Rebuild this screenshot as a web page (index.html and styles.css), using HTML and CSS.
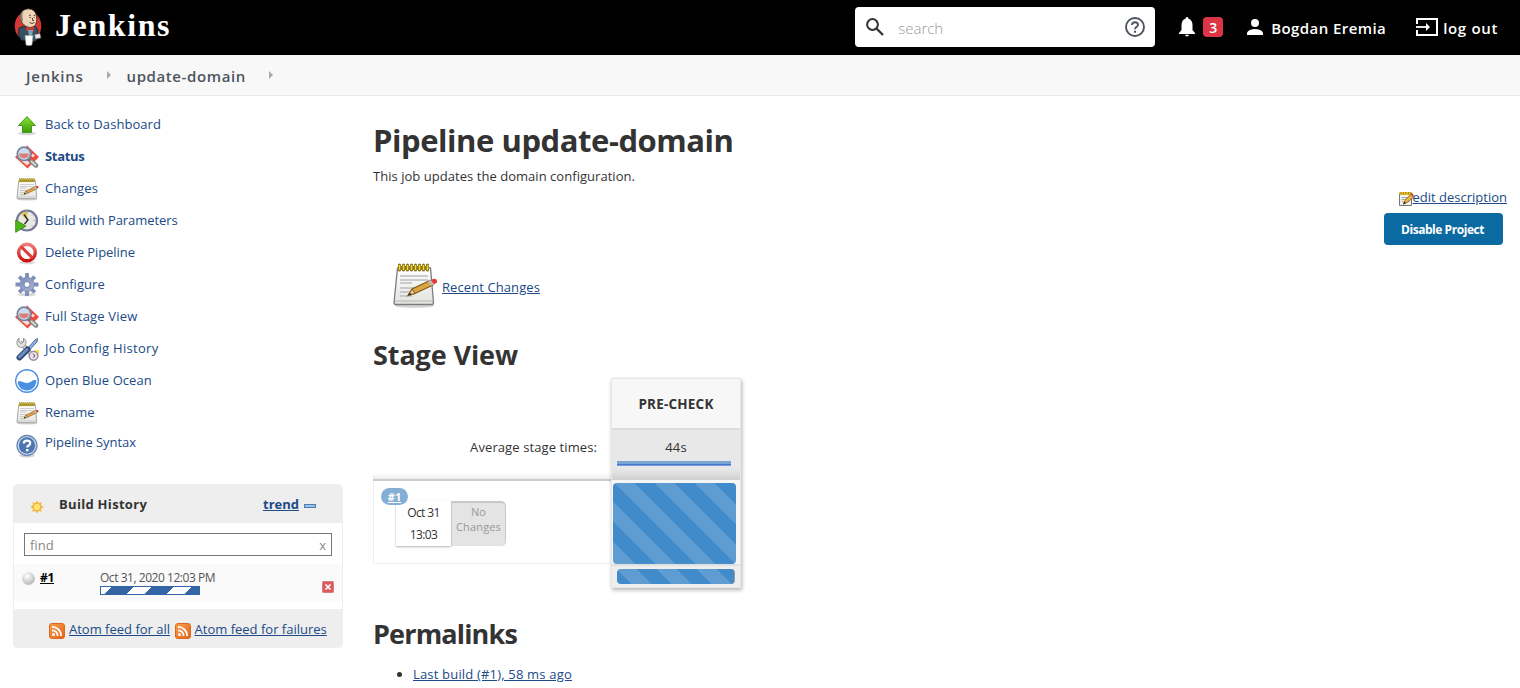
FILE: index.html
```html
<!DOCTYPE html>
<html lang="en">
<head>
<meta charset="utf-8">
<title>update-domain [Jenkins]</title>
<link rel="stylesheet" href="styles.css">
</head>
<body>
<svg class="defs" width="0" height="0" aria-hidden="true">
  <defs>
    <linearGradient id="g-green" x1="0" y1="0" x2="0" y2="1"><stop offset="0" stop-color="#8ae234"/><stop offset="1" stop-color="#3c9a0c"/></linearGradient>
    <linearGradient id="g-paper" x1="0" y1="0" x2="0" y2="1"><stop offset="0" stop-color="#ffffff"/><stop offset="1" stop-color="#e2e2df"/></linearGradient>
    <linearGradient id="g-red" x1="0" y1="0" x2="0" y2="1"><stop offset="0" stop-color="#f07c7c"/><stop offset="1" stop-color="#cc1010"/></linearGradient>
    <linearGradient id="g-gear" x1="0" y1="0" x2="1" y2="1"><stop offset="0" stop-color="#7590c0"/><stop offset="1" stop-color="#b3acd0"/></linearGradient>
    <linearGradient id="g-rss" x1="0" y1="0" x2="1" y2="1"><stop offset="0" stop-color="#f7a04b"/><stop offset="1" stop-color="#e8621b"/></linearGradient>
    <radialGradient id="g-ball" cx=".4" cy=".3" r=".7"><stop offset="0" stop-color="#ffffff"/><stop offset="1" stop-color="#b8b8b8"/></radialGradient>
    <symbol id="i-up" viewBox="0 0 24 24">
      <ellipse cx="12" cy="20.4" rx="9" ry="1.8" fill="#000" opacity=".15"/>
      <path d="M12 3.6 20.5 12.500H16.500V19.500H7.500V12.500H3.500Z" fill="url(#g-green)" stroke="#3f9b14"/>
    </symbol>
    <symbol id="i-stage" viewBox="0 0 24 24">
      <path d="M12 .5 24 12 12.500 23.500 0 12Z" fill="#ee4d3c"/>
      <path d="M3 13 12 20.500 15 18 8 12ZM18 8.500l2 2-2 2-2-2Z" fill="#f5dedb"/>
      <circle cx="9" cy="8.800" r="6.700" fill="#cfdcec" stroke="#7686a2" stroke-width="1.700"/>
      <path d="M4 8.500h10a5 5 0 0 1-10 0Z" fill="#d9807f"/>
      <path d="m14 14 2 2" stroke="#777" stroke-width="2.500"/>
      <path d="m16.500 16.500 4.500 4" stroke="#81857e" stroke-width="4.400" stroke-linecap="round"/>
      <path d="m16.500 16.500 4 3.600" stroke="#d5d6d2" stroke-width="2" stroke-linecap="round"/>
    </symbol>
    <symbol id="i-note" viewBox="0 0 48 48">
      <ellipse cx="24.500" cy="44.500" rx="20" ry="2.500" fill="#000" opacity=".16"/>
      <path d="M7.500 7H40.500L43.500 41.500Q43.500 43.500 41.500 43.500H6Q4 43.500 4 41.500Z" fill="url(#g-paper)" stroke="#7c7c79" stroke-width="1.300"/>
      <path d="M5 40H43" stroke="#b5b5b2"/>
      <path d="M10 15H38M10 19H38M10 22H22M10 27H30M10 31H26M10 35H22" stroke="#bdbdbd" stroke-width="1.400"/>
      <path d="M8 5H39V9H8Z" fill="#8b7721"/>
      <path d="M9.500 4v5M13.500 4v5M17.500 4v5M21.500 4v5M25.500 4v5M29.500 4v5M33.500 4v5M37.500 4v5" stroke="#7a6510" stroke-width="3" stroke-linecap="round"/>
      <path d="M9.500 4.500v4M13.500 4.500v4M17.500 4.500v4M21.500 4.500v4M25.500 4.500v4M29.500 4.500v4M33.500 4.500v4M37.500 4.500v4" stroke="#f1d738" stroke-width="1.700" stroke-linecap="round"/>
      <path d="M18 34.500 22 28 40 19.500 43 24 25 32.500Z" fill="#dda640" stroke="#805b22" stroke-width="1.200"/>
      <path d="M18 34.500 22 28 25 32.500Z" fill="#e9cf9f" stroke="#805b22"/>
      <path d="M18 34.500l2-3 1.800 2Z" fill="#333"/>
      <path d="m38 20.300 3-1.400 3 4.500-3 1.400Z" fill="#bdbdbd"/>
      <path d="m41 19 3-1.300q3.500.3 3 3.800l-3 2Z" fill="#e23a32"/>
    </symbol>
    <symbol id="i-edit" viewBox="0 0 16 16">
      <path d="M1.500 2.500H13.500V14.500H1.500Z" fill="#f2f2ef" stroke="#777"/>
      <path d="M1.500 1h12v3h-12Z" fill="#e3bf2e"/>
      <path d="M3 1v2.500M5.500 1v2.500M8 1v2.500M10.500 1v2.500M13 1v2.500" stroke="#8d6f12" stroke-width=".7"/>
      <path d="M3.500 6.500h6M3.500 8.500h4M3.500 10.500h2" stroke="#aaa"/>
      <path d="M5.500 13 7.500 8.500 13 3.500 15.500 6 10 11Z" fill="#f0b53c" stroke="#6d4c17" stroke-width=".8"/>
      <path d="m12.500 3 1.500-1 2 2.300-1 1.200Z" fill="#d84a3a"/>
      <path d="M5 13.500 6.300 10.800 7.800 12.300Z" fill="#222"/>
    </symbol>
    <symbol id="i-build" viewBox="0 0 24 24">
      <circle cx="12" cy="11.500" r="10" fill="#e8e9e3" stroke="#77799b" stroke-width="2.200"/>
      <path d="M12 11.500 6 5q3-3 6.500-2Z" fill="#e7c75a"/>
      <path d="M9 5.500 13 11 9.500 15" fill="none" stroke="#25252a" stroke-width="1.300"/>
      <path d="M12 3v1.500M20 11.500h-1.500M18 5.500l-1 1M18 17.500l-1-1" stroke="#9a9a92"/>
      <path d="M.7 11 11 17 .7 23.300Z" fill="#4fb518" stroke="#2d7d0c" stroke-width=".8"/>
    </symbol>
    <symbol id="i-stop" viewBox="0 0 24 24">
      <ellipse cx="12" cy="21.500" rx="8" ry="1.800" fill="#000" opacity=".15"/>
      <circle cx="12" cy="11.500" r="8.300" fill="#fafafa" stroke="url(#g-red)" stroke-width="3.400"/>
      <path d="m6.200 5.700 11.600 11.600" stroke="#de3b3b" stroke-width="3"/>
    </symbol>
    <symbol id="i-gear" viewBox="0 0 24 24">
      <ellipse cx="12" cy="21.500" rx="9" ry="1.800" fill="#000" opacity=".15"/>
      <g stroke="#7f90b8" stroke-width="3.800"><path d="M12 0v23M.5 11.500h23M4.200 3.700l15.600 15.600M19.800 3.700 4.200 19.300"/></g>
      <circle cx="12" cy="11.500" r="7.200" fill="url(#g-gear)" stroke="#7f90b8" stroke-width=".8"/>
      <circle cx="12" cy="11.500" r="3" fill="#fff" stroke="#7181a8"/>
    </symbol>
    <symbol id="i-tools" viewBox="0 0 24 24">
      <path d="M5 5 18 19" stroke="#8a8d88" stroke-width="4.500"/><path d="M5 5 18 19" stroke="#dfe0dc" stroke-width="2.700"/>
      <path d="M2 4q-1 6 4.500 6.500 5-.5 4.500-6.500L8.500 1v4L6 6.500 4 5V1Z" fill="#e1e2df" stroke="#8a8d88" stroke-width=".9"/>
      <path d="m13 11 7-8 2.500-1.500L22 5l-7 7.500Z" fill="#8fb0da" stroke="#4a6fa5"/>
      <path d="m12.500 12.500-8 8" stroke="#2c4a78" stroke-width="6" stroke-linecap="round"/>
      <path d="m12 12.500-7.500 7.500" stroke="#6e8fbd" stroke-width="3" stroke-linecap="round"/>
      <path d="M19 13h5v5Z" fill="#f4e63a"/>
      <circle cx="18.500" cy="18.800" r="4.400" fill="#eadfe6" stroke="#9a87a8" stroke-width="1.400"/>
      <path d="m18 16.500 2 2.500-2 1.500" fill="none" stroke="#6c5d45"/>
    </symbol>
    <symbol id="i-ocean" viewBox="0 0 24 24">
      <circle cx="12" cy="12" r="11.300" fill="#fff" stroke="#4a90e2" stroke-width="1.400"/>
      <path d="M2.700 12.500C7 11 9.500 14.800 13.500 13.800 17 12.800 17.500 10 21.400 11.200 21.500 17 17.500 21.400 12 21.400S2.800 17.500 2.700 12.500Z" fill="#4a90e2"/>
    </symbol>
    <symbol id="i-help" viewBox="0 0 24 24">
      <ellipse cx="12" cy="21.500" rx="8" ry="2" fill="#000" opacity=".16"/>
      <circle cx="12" cy="11.500" r="10" fill="#d2dceb" stroke="#6b89b5" stroke-width="1.300"/>
      <circle cx="12" cy="11.500" r="8.200" fill="#4d77b0"/>
      <path d="M8.800 9.500Q8.800 6.700 12 6.700T15.200 9.200Q15.200 10.800 13.500 11.600 12.200 12.200 12.200 13.600" fill="none" stroke="#fff" stroke-width="2.300"/>
      <path d="M11 15h2.500v2.300H11Z" fill="#fff"/>
    </symbol>
    <symbol id="i-rss" viewBox="0 0 16 16">
      <rect x=".5" y=".5" width="15" height="15" rx="2.500" fill="url(#g-rss)" stroke="#d9691f"/>
      <circle cx="4.500" cy="11.500" r="1.500" fill="#fff"/>
      <path d="M3 7.300A5.700 5.700 0 0 1 8.700 13M3 3.800A9.200 9.200 0 0 1 12.200 13" fill="none" stroke="#fff" stroke-width="1.800"/>
    </symbol>
  </defs>
</svg>

<header class="topbar">
  <a class="brand">
    <svg class="butler" viewBox="0 0 28 38">
      <ellipse cx="14" cy="18" rx="13.300" ry="14.800" fill="#d33833"/>
      <path d="M5 20 10 18 15 23 21 18 24 22 23 32 19 34 7 32Q3 26 5 20Z" fill="#335061" stroke="#1d2226" stroke-width=".8"/>
      <path d="M6.500 10Q7 1 14 .8 22 1 22.500 9 23.500 15 20 18.500 16 21 11.500 18 7 16 6.500 10Z" fill="#f0d6b7" stroke="#302a25" stroke-width=".8"/>
      <path d="M6.500 11Q5.500 4 10 2 7.500 6 9 11L8.500 14Z" fill="#8b8680"/>
      <path d="M15 7.500l2-.5M19.500 7.300l1.500.3M15.500 9.500h1.500M19.500 9.500h1M18.500 10v2.500h1.500M15.500 14.500q2.500 2 5 0" fill="none" stroke="#493830" stroke-width=".9"/>
      <path d="M12 18.500 16 20.500 20 18.500V23.500L16 21.800 12 23Z" fill="#d33833"/>
      <path d="M14 22h5l-1 6h-3Z" fill="#7fa3b8"/>
      <path d="M11 27.500h8l-1 9.500q-3 1-6 0Z" fill="#fff" stroke="#999" stroke-width=".5"/>
      <path d="M20.500 26.500 26 25.500 27 30 21.500 31Z" fill="#e8e5df" stroke="#555" stroke-width=".5"/>
    </svg>
    <span class="wordmark">Jenkins</span>
  </a>
  <div class="search">
    <svg class="search-icon" viewBox="0 0 18 18"><circle cx="6.500" cy="6.500" r="5.400" fill="none" stroke="#333" stroke-width="2"/><path d="m10.500 10.500 6.500 6.500" stroke="#333" stroke-width="2.300"/></svg>
    <span class="search-hint">search</span>
    <svg class="search-help" viewBox="0 0 20 20"><circle cx="10" cy="10" r="9" fill="none" stroke="#4d545d" stroke-width="1.900"/><path d="M7 8Q7 5.200 10 5.200T13 7.900C13 9.800 10 9.900 10 12.300" fill="none" stroke="#4d545d" stroke-width="1.900"/><path d="M9 13.800h2v2H9Z" fill="#4d545d"/></svg>
  </div>
  <a class="alerts">
    <svg class="bell" viewBox="0 0 16 19"><path d="M8 0Q9.500 0 9.500 1.800 13.500 3 13.500 8V13L16 16V17H0V16L2.500 13V8Q2.500 3 6.500 1.800 6.500 0 8 0ZM6 17.700h4Q9.800 19.400 8 19.400T6 17.700Z" fill="#fff"/></svg>
    <span class="badge">3</span>
  </a>
  <a class="account">
    <svg class="person" viewBox="0 0 16 16"><circle cx="8" cy="4" r="4" fill="#fff"/><path d="M0 16V13.500Q2 10 8 10T16 13.500V16Z" fill="#fff"/></svg>
    <span>Bogdan Eremia</span>
  </a>
  <a class="logout">
    <svg class="exit" viewBox="0 0 22 18"><path d="M1 6V1H21V17H1V12" fill="none" stroke="#fff" stroke-width="2"/><path d="M0 9h11" stroke="#fff" stroke-width="1.800"/><path d="m10 5 4 4-4 4Z" fill="#fff"/></svg>
    <span>log out</span>
  </a>
</header>

<nav class="crumbs">
  <a class="crumb-root">Jenkins</a><i class="arrow"></i><a class="crumb-job">update-domain</a><i class="arrow"></i>
</nav>

<div class="page">
  <aside class="side">
    <ul class="tasks">
      <li><svg><use href="#i-up"/></svg><a>Back to Dashboard</a></li>
      <li><svg><use href="#i-stage"/></svg><a class="current">Status</a></li>
      <li><svg><use href="#i-note"/></svg><a class="loose">Changes</a></li>
      <li><svg><use href="#i-build"/></svg><a class="tight">Build with Parameters</a></li>
      <li><svg><use href="#i-stop"/></svg><a class="tight">Delete Pipeline</a></li>
      <li><svg><use href="#i-gear"/></svg><a>Configure</a></li>
      <li><svg><use href="#i-stage"/></svg><a class="loose">Full Stage View</a></li>
      <li><svg><use href="#i-tools"/></svg><a class="looser">Job Config History</a></li>
      <li><svg><use href="#i-ocean"/></svg><a>Open Blue Ocean</a></li>
      <li><svg><use href="#i-note"/></svg><a class="tight">Rename</a></li>
      <li class="syntax"><svg><use href="#i-help"/></svg><a class="tight">Pipeline Syntax</a></li>
    </ul>

    <section class="history">
      <div class="history-head">
        <svg class="sun" viewBox="0 0 16 16"><path d="m8 .5 1.800 3 3.500-1-.8 3.300 3 2.200-3 2.200.8 3.300-3.500-1-1.800 3-1.800-3-3.500 1 .8-3.300L.5 8l3-2.200-.8-3.300 3.500 1Z" fill="#f6b545"/><circle cx="8" cy="8" r="4.300" fill="#fde76d" stroke="#f0a530" stroke-width=".8"/></svg>
        <b class="history-title">Build History</b>
        <a class="trend">trend</a>
        <i class="collapse"></i>
      </div>
      <div class="find"><span>find</span><span>x</span></div>
      <div class="build">
        <svg class="ball" viewBox="0 0 14 14"><circle cx="7" cy="7" r="6.900" fill="url(#g-ball)"/></svg>
        <a class="build-no">#1</a>
        <div class="build-info">
          <span class="build-date">Oct 31, 2020 12:03 PM</span>
          <div class="progress"></div>
        </div>
        <svg class="abort" viewBox="0 0 12 12"><rect x=".5" y=".5" width="11" height="11" rx="1" fill="#df5a5e" stroke="#d07f82"/><path d="m3.500 3.500 5 5M8.500 3.500l-5 5" stroke="#fff" stroke-width="1.700"/></svg>
      </div>
      <div class="feeds">
        <svg><use href="#i-rss"/></svg><a>Atom feed for all</a>
        <svg><use href="#i-rss"/></svg><a>Atom feed for failures</a>
      </div>
    </section>
  </aside>

  <main class="main">
    <h1>Pipeline update-domain</h1>
    <p class="desc">This job updates the domain configuration.</p>
    <div class="actions">
      <a class="edit"><svg><use href="#i-edit"/></svg><span>edit description</span></a>
      <button class="disable">Disable Project</button>
    </div>
    <div class="recent"><svg><use href="#i-note"/></svg><a>Recent Changes</a></div>

    <h2 class="stage-title">Stage View</h2>
    <div class="stages">
      <div class="runs">
        <div class="avg-label">Average stage times:</div>
        <div class="run">
          <a class="run-no">#1</a>
          <div class="run-cards">
            <div class="run-time"><span>Oct 31</span><span>13:03</span></div>
            <div class="run-changes"><span>No</span><span>Changes</span></div>
          </div>
        </div>
      </div>
      <div class="stage">
        <div class="stage-name">PRE-CHECK</div>
        <div class="stage-avg"><span>44s</span><i class="avg-bar"></i></div>
        <div class="stage-cell"><div class="stripes"></div></div>
        <div class="stage-foot"><div class="stripes small"></div></div>
      </div>
    </div>

    <h2 class="perma-title">Permalinks</h2>
    <ul class="perma"><li><a>Last build (#1), 58 ms ago</a></li></ul>
  </main>
</div>
</body>
</html>
```

FILE: styles.css
```css
* { box-sizing: border-box; }

body {
  margin: 0;
  height: 688px;
  overflow: hidden;
  background: #fff;
  color: #333;
  font: 13px/18px "Open Sans", "Noto Sans", sans-serif;
}

a { color: #204a87; }
svg { display: block; flex: none; overflow: visible; }
.defs { position: absolute; }

/* top bar */
.topbar {
  display: flex;
  align-items: center;
  height: 55px;
  padding: 0 22px 2px 14px;
  background: #000;
  font-size: 15px;
  font-weight: 600;
}
.topbar a { color: #fff; display: flex; align-items: center; }
.brand { margin-right: auto; }
.butler { width: 28px; height: 38px; }
.wordmark { margin: -3px 0 0 13px; font: bold 32px/38px "Liberation Serif", serif; letter-spacing: 1.6px; }
.search {
  display: flex;
  align-items: center;
  width: 300px;
  height: 40px;
  padding: 0 10px 0 11px;
  border-radius: 4px;
  background: #fff;
}
.search-icon { width: 18px; height: 18px; }
.search-hint { margin: 3px auto 0 14px; color: #999; font-weight: 300; }
.search-help { width: 20px; height: 20px; }
.alerts { margin-left: 24px; }
.bell { width: 16px; height: 19px; }
.badge {
  width: 20px;
  height: 20px;
  margin-left: 8px;
  border-radius: 4px;
  background: #dc3545;
  font-size: 14px;
  line-height: 22px;
  text-align: center;
}
.account { margin-left: 24px; letter-spacing: .42px; }
.account span, .logout span { margin-top: 3px; white-space: nowrap; }
.person { width: 16px; height: 16px; margin-right: 8px; }
.logout { margin-left: 30px; letter-spacing: .66px; }
.exit { width: 22px; height: 18px; margin-right: 5px; }

/* breadcrumbs */
.crumbs {
  display: flex;
  align-items: center;
  height: 41px;
  padding: 1px 0 0 26px;
  border-bottom: 1px solid #eaeaea;
  background: #f8f8f8;
  font-size: 15px;
  font-weight: 600;
}
.crumbs a { color: #4d545d; }
.crumb-root { letter-spacing: .75px; }
.crumb-job { letter-spacing: .6px; }
.arrow {
  margin: -2px 16px 0 23px;
  border: solid transparent;
  border-width: 4px 0 4px 4px;
  border-left-color: #aaa;
}

.page { display: flex; }

/* sidebar */
.side { width: 343px; padding: 13px 0 0 13px; }
.tasks { margin: 0; padding: 0 0 0 2px; list-style: none; letter-spacing: .06px; }
.tasks li { display: flex; align-items: center; height: 32px; }
.tasks svg { width: 24px; height: 24px; margin-right: 6px; }
.tasks a { margin-top: -2px; }
.tasks .current { font-weight: 700; letter-spacing: -.3px; }
.tasks .tight { letter-spacing: -.06px; }
.tasks .loose { letter-spacing: .18px; }
.tasks .looser { letter-spacing: .3px; }
.tasks .syntax svg { margin-top: 2px; }
.tasks .syntax a { margin-top: -6px; }

.history {
  width: 330px;
  margin-top: 23px;
  border: 1px solid #eee;
  border-radius: 5px;
}
.history-head { display: flex; align-items: center; height: 38px; padding: 0 26px 0 16px; background: #eee; }
.sun { width: 14px; height: 14px; margin: 5px 15px 0 0; }
.history-title { color: #333; letter-spacing: .3px; }
.trend { margin-left: auto; font-weight: 700; text-decoration: underline; }
.collapse { width: 12px; height: 4px; margin: 4px 0 0 5px; border: 1px solid #4a7fb5; background: #9cc3e6; }
.find {
  display: flex;
  justify-content: space-between;
  height: 23px;
  margin: 10px 10px 8px;
  padding: 2px 5px 0;
  border: 1px solid #777;
  color: #888;
}
.build { display: flex; height: 38px; padding-left: 8px; background: #fafafa; }
.ball { width: 13px; height: 13px; margin-top: 8px; }
.build-no { margin: 5px 0 0 5px; width: 60px; color: #000; font-weight: 700; font-size: 12px; letter-spacing: -.3px; text-decoration: underline; }
.build-info { width: 222px; padding-top: 5px; color: #555; font-size: 12px; line-height: 17px; letter-spacing: -.46px; }
.progress {
  width: 100px;
  height: 9px;
  border: 1px solid #3465a4;
  background: repeating-linear-gradient(135deg, #fff 0 7.500px, #3465a4 7.500px 23px, #fff 23px 28.280px);
}
.abort { width: 12px; height: 12px; margin-top: 17px; }
.feeds {
  display: flex;
  align-items: center;
  height: 38px;
  margin-top: 7px;
  padding: 2px 0 0 35px;
  background: #eee;
}
.feeds svg { width: 16px; height: 16px; margin: 3px 4px 0 0; }
.feeds a { margin-right: 4.500px; text-decoration: underline; white-space: nowrap; }

/* main column */
.main { flex: 1; padding-left: 30px; }
h1, h2, p { margin: 0; }
h1 { padding-top: 23px; font-size: 31px; line-height: 42px; letter-spacing: -.45px; white-space: nowrap; }
h2 { font-size: 27px; line-height: 36px; letter-spacing: -.1px; }
.desc { padding-top: 6px; letter-spacing: .04px; }
.actions { display: flex; flex-direction: column; align-items: flex-end; padding-top: 2px; }
.edit { display: flex; align-items: center; height: 20px; margin-right: 13px; }
.edit span { text-decoration: underline; }
.edit svg { width: 16px; height: 16px; margin-top: 4px; margin-right: -1px; }
.disable {
  width: 119px;
  height: 32px;
  margin: 6px 17px 0 0;
  padding: 1px 2px 0 0;
  border: 0;
  border-radius: 4px;
  background: #0b6aa2;
  color: #fff;
  font: 700 12px/32px "Open Sans", "Noto Sans", sans-serif;
  letter-spacing: -.45px;
  white-space: nowrap;
}
.recent { display: flex; align-items: center; height: 48px; margin-top: 16px; padding-left: 17px; }
.recent svg { width: 48px; height: 48px; }
.recent a { margin: 3px 0 0 4px; letter-spacing: .09px; text-decoration: underline; }
.stage-title { margin-top: 28px; }

.stages { display: flex; height: 210px; margin-top: 5px; }
.runs { width: 238px; }
.avg-label {
  height: 103px;
  padding: 60px 14px 0 0;
  border-bottom: 2px solid #ccc;
  background: linear-gradient(to top, #ececec, #fff 6px) padding-box;
  letter-spacing: .1px;
  text-align: right;
}
.run { height: 83px; padding: 7px 0 0 7px; border: solid #f0f0f0; border-width: 0 0 1px 1px; }
.run-no {
  position: relative;
  z-index: 1;
  display: block;
  width: 27px;
  height: 17px;
  border-radius: 9px;
  background: #83aed6;
  color: #fff;
  font-size: 11px;
  font-weight: 700;
  line-height: 17px;
  text-align: center;
  text-decoration: underline;
}
.run-cards { display: flex; height: 45px; margin: -4px 0 0 15px; text-align: center; }
.run-time {
  display: flex;
  flex-direction: column;
  align-items: center;
  width: 55px;
  padding-top: 1px;
  background: #fff;
  box-shadow: 0 1px 2px rgba(0,0,0,.3);
  font-size: 12px;
  line-height: 22px;
  letter-spacing: -.6px;
}
.run-changes {
  display: flex;
  flex-direction: column;
  align-items: center;
  width: 55px;
  border: solid #c8c8c8;
  border-width: 2px 1px 0 1px;
  border-radius: 0 5px 5px 0;
  background: #e4e4e4;
  color: #999;
  font-size: 11px;
  line-height: 15px;
  letter-spacing: .15px;
}
.run-changes span:first-child { padding-top: 1px; }
.stage { width: 130px; border: 1px solid #e6e6e6; background: #eee; box-shadow: 1px 2px 4px rgba(0,0,0,.3); }
.stage-name {
  height: 51px;
  padding-top: 16px;
  border-bottom: 2px solid #ddd;
  background: #f7f7f7;
  font-weight: 700;
  font-size: 13.500px;
  letter-spacing: .2px;
  text-align: center;
}
.stage-avg {
  display: flex;
  flex-direction: column;
  align-items: center;
  height: 50px;
  padding-top: 8px;
  background: linear-gradient(to top, #cfcfcf, #e8e8e8 11px);
  letter-spacing: .2px;
}
.avg-bar { width: 114px; height: 5px; margin: 5px 4px 0 0; background: linear-gradient(#7ba5d1 50%, #4a76d0 50% 75%, #7a9cd8 75%); }
.stage-cell { height: 86px; padding: 3px 4px 2px 1px; border-bottom: 2px solid #e0e0e0; background: #f6f6f6; }
.stripes {
  height: 81px;
  border-radius: 4px;
  background: #428bca linear-gradient(45deg, rgba(255,255,255,.15) 25%, transparent 25% 50%, rgba(255,255,255,.15) 50% 75%, transparent 75%) 2px 0 / 40px 40px;
}
.stage-foot { padding: 3px 5px 0 5px; }
.stripes.small { height: 15px; background-position: 0 0; border-right: 1px solid #999; }

.perma-title { margin-top: 28px; letter-spacing: -.84px; }
.perma { margin: 13px 0 0; padding-left: 40px; letter-spacing: .18px; }
.perma a { text-decoration: underline; }
```
